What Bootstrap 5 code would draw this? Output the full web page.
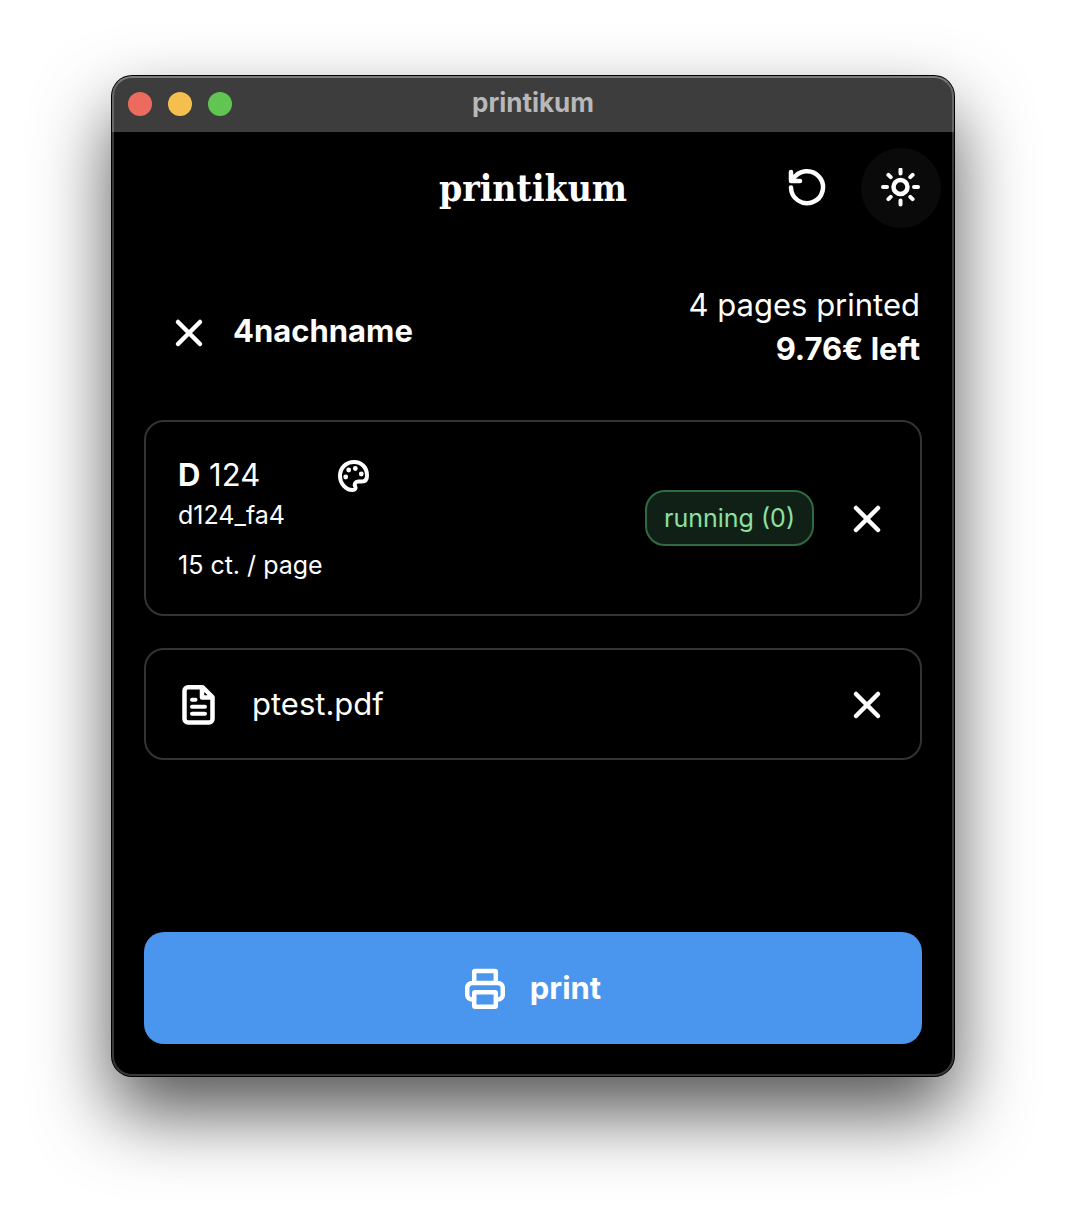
<!DOCTYPE html>
<html lang="en">
<head>
<meta charset="utf-8">
<meta name="viewport" content="width=device-width, initial-scale=1">
<title>printikum</title>
<link href="https://cdn.jsdelivr.net/npm/bootstrap@5.3.0/dist/css/bootstrap.min.css" rel="stylesheet">
<style>
  body { font-family: Inter, "Liberation Sans", sans-serif; padding: 76px 112px 148px; background: #fff; }
  .app-window { background: #000; color: #fff; border-radius: 20px; box-shadow: 0 0 0 1px #000, 0 36px 74px rgba(0,0,0,.68); }
  /* hairline highlight along the window edge */
  .app-window::after { content: ""; position: absolute; inset: 0; border: 2px solid rgba(255,255,255,.22); border-top-color: rgba(255,255,255,.32); border-radius: 20px; pointer-events: none; }
  .title-bar { height: 56px; background: #3d3d3d; border-radius: 20px 20px 0 0; display: grid; grid-template-columns: 1fr auto 1fr; align-items: center; padding: 0 16px; }
  .win-dot { width: 24px; height: 24px; border: 0; padding: 0; border-radius: 50%; }
  .dot-close { background: #ed6a5e; } .dot-min { background: #f5bf4f; } .dot-max { background: #61c554; }
  .win-title { font-size: 26px; line-height: 32px; font-weight: 700; color: #b8b8b8; padding-bottom: 2px; }
  .app-header { display: grid; grid-template-columns: 1fr auto 1fr; align-items: center; padding: 16px 13px 0; }
  .brand { font: 700 37px/48px "DejaVu Serif Condensed", "DejaVu Serif", serif; margin: 0; }
  .header-actions { gap: 14px; }
  .icon-btn { width: 80px; height: 80px; border: 0; padding: 0; border-radius: 50%; background: transparent; color: #fff; display: inline-flex; align-items: center; justify-content: center; flex: none; }
  .icon-btn.active-btn { background: #0a0a0a; }
  .icon { fill: none; stroke: currentColor; stroke-width: 4.5; stroke-linecap: round; stroke-linejoin: round; flex: none; }
  .app-body { padding: 55px 32px 32px; }
  .text-main { font-size: 31px; line-height: 44px; }
  .text-sub { font-size: 25px; line-height: 36px; }
  .user-row { padding: 0 2px 0 5px; margin-bottom: 49px; }
  .panel { border: 2px solid #333; border-radius: 20px; padding: 0 13px 0 32px; }
  .panel-printer { padding-top: 31px; padding-bottom: 31px; margin-bottom: 32px; }
  .panel-file { padding-top: 14px; padding-bottom: 14px; }
  .file-name { padding-left: 34px; }
  .printer-name { gap: 78px; }
  .price { margin-top: 14px; }
  .state-pill { border: 2px solid #2f6a40; background: #112016; color: #8ce0a0; border-radius: 20px; padding: 8px 17px; margin-right: 13px; }
  .print-btn { height: 112px; border: 0; border-radius: 20px; background: #4a95ed; color: #fff; font-weight: 700; gap: 25px; }
</style>
</head>
<body class="min-vh-100 d-flex flex-column">
<div class="app-window position-relative flex-grow-1 d-flex flex-column">
  <div class="title-bar">
    <div class="d-flex gap-3">
      <button class="win-dot dot-close" type="button" aria-label="Close"></button>
      <button class="win-dot dot-min" type="button" aria-label="Minimize"></button>
      <button class="win-dot dot-max" type="button" aria-label="Zoom"></button>
    </div>
    <div class="win-title">printikum</div>
  </div>

  <header class="app-header">
    <span></span>
    <h1 class="brand">printikum</h1>
    <div class="header-actions d-flex justify-content-end">
      <button class="icon-btn" type="button" aria-label="Reload">
        <svg class="icon" width="40" height="40" viewBox="0 0 40 40"><path d="M4 4v9H13M4 19.500A16 16 0 1 0 6 11.500"/></svg>
      </button>
      <button class="icon-btn active-btn" type="button" aria-label="Toggle theme">
        <svg class="icon" width="40" height="40" viewBox="0 0 40 40"><circle cx="19.500" cy="19" r="7"/><path stroke-width="4" d="M19.500 1.500v4M19.500 32.500v4M2 19h4M33 19h4M7.400 6.900l2.300 2.300M29.300 28.800l2.300 2.300M7.400 31.100l2.300-2.300M29.300 9.200l2.300-2.300"/></svg>
      </button>
    </div>
  </header>

  <main class="app-body flex-grow-1 d-flex flex-column">
    <section class="user-row d-flex align-items-end justify-content-between">
      <div class="d-flex align-items-center">
        <button class="icon-btn" type="button" aria-label="Log out">
          <svg class="icon" width="40" height="40" viewBox="0 0 40 40"><path d="M9 11l22 22M31 11L9 33"/></svg>
        </button>
        <span class="text-main fw-bold ps-1">4nachname</span>
      </div>
      <div class="text-main text-end">
        <div>4 pages printed</div>
        <div class="fw-bold">9.76€ left</div>
      </div>
    </section>

    <section class="panel panel-printer d-flex align-items-center">
      <div class="me-auto">
        <div class="printer-name d-flex align-items-center text-main">
          <span><b>D</b> 124</span>
          <svg class="icon" width="32" height="34" viewBox="0 -1 32 34"><path stroke-width="4" d="M16 3C8 3 2 9 2 17C2 24.500 8 31 14.500 31c2.700 0 3.700-1.600 2.700-3.600c-1.200-2.600.2-5 3-5H24c3.500 0 5-2.500 5-6C29 8.500 23.500 3 16 3z"/><g fill="currentColor" stroke="none"><circle cx="7.700" cy="18" r="2.400"/><circle cx="10.700" cy="11" r="2.400"/><circle cx="17.300" cy="9.500" r="2.400"/><circle cx="23.300" cy="15" r="2.400"/></g></svg>
        </div>
        <div class="text-sub">d124_fa4</div>
        <div class="text-sub price">15 ct. / page</div>
      </div>
      <span class="state-pill text-sub">running (0)</span>
      <button class="icon-btn" type="button" aria-label="Remove printer">
        <svg class="icon" width="40" height="40" viewBox="0 0 40 40"><path d="M9 10l22 22M31 10L9 32"/></svg>
      </button>
    </section>

    <section class="panel panel-file d-flex align-items-center">
      <svg class="icon" width="40" height="42" viewBox="0 0 40 42"><path d="M10 4.200H24.500L34.500 14V36a3.500 3.500 0 0 1-3.500 3.500H10a3.500 3.500 0 0 1-3.500-3.500V7.700A3.500 3.500 0 0 1 10 4.200zM24 4.500V14.500H34"/><path stroke-width="4" d="M14 16.700h3.500M14 23.700H27M14 30.700H27"/></svg>
      <span class="file-name text-main me-auto">ptest.pdf</span>
      <button class="icon-btn" type="button" aria-label="Remove file">
        <svg class="icon" width="40" height="40" viewBox="0 0 40 40"><path d="M9 10l22 22M31 10L9 32"/></svg>
      </button>
    </section>

    <button class="print-btn text-main w-100 mt-auto d-flex align-items-center justify-content-center" type="button">
      <svg class="icon" width="40" height="42" viewBox="0 0 40 42"><path d="M9.200 16V5a1 1 0 0 1 1-1H29.800a1 1 0 0 1 1 1V16M9 32.500H7.200a5 5 0 0 1-5-5V21a5 5 0 0 1 5-5H32.800a5 5 0 0 1 5 5V27.500a5 5 0 0 1-5 5H31"/><rect x="9.200" y="25.300" width="21.600" height="14.400" rx="1"/></svg>
      <span>print</span>
    </button>
  </main>
</div>
<script src="https://cdn.jsdelivr.net/npm/bootstrap@5.3.0/dist/js/bootstrap.bundle.min.js"></script>
</body>
</html>
